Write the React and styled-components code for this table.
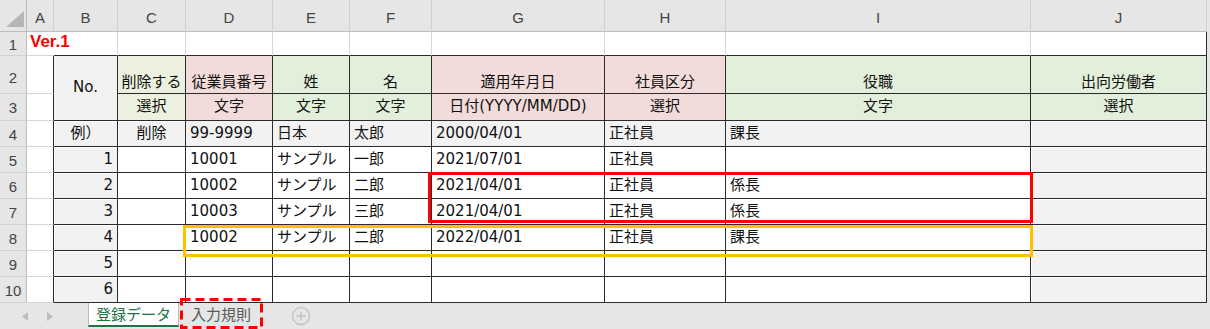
import React from 'react';
import styled, { createGlobalStyle } from 'styled-components';

const GlobalStyle = createGlobalStyle`
  html, body { margin: 0; padding: 0; background: #e6e6e6; }
  body {
    width: 1210px;
    height: 329px;
    overflow: hidden;
    font-family: "DejaVu Sans", "Noto Sans CJK JP", sans-serif;
  }
`;

const COLS = [27, 27, 64, 68, 87, 77, 82, 173, 121, 305, 176];
const ROWS = [32, 24, 38, 27, 26, 26, 26, 26, 26, 26, 26];
const LETTERS = ['A', 'B', 'C', 'D', 'E', 'F', 'G', 'H', 'I', 'J'];

const DARK = '#2b2b2b';
const GRID = '#d6d6d6';
const G1 = '#ebf1de';
const G2 = '#e2efda';
const PK = '#f2dcdb';
const GR = '#f2f2f2';

const Frame = styled.div`
  position: relative;
  width: 1210px;
  height: 329px;
  display: flex;
  flex-direction: column;
  background: #e6e6e6;
`;

const Sheet = styled.div`
  display: grid;
  grid-template-columns: ${COLS.map((c) => c + 'px').join(' ')};
  grid-template-rows: ${ROWS.map((r) => r + 'px').join(' ')};
  width: max-content;
  background: #fff;
`;

const Corner = styled.div`
  box-sizing: border-box;
  background: #e6e6e6;
  border-right: 1px solid #bdbdbd;
  border-bottom: 1px solid #bdbdbd;
  display: flex;
  align-items: flex-end;
  justify-content: flex-end;
  padding: 0 2px 4px 0;
`;

const ColHead = styled.div`
  box-sizing: border-box;
  background: #e6e6e6;
  border-right: 1px solid #d0d0d0;
  border-bottom: 1px solid #bdbdbd;
  display: flex;
  align-items: center;
  justify-content: center;
  padding-top: 4px;
  font-family: "Liberation Sans", Arial, sans-serif;
  font-size: 15px;
  color: #444;
`;

const RowHead = styled.div`
  box-sizing: border-box;
  background: #e6e6e6;
  border-right: 1px solid #bdbdbd;
  border-bottom: 1px solid #d2d2d2;
  display: flex;
  align-items: center;
  justify-content: center;
  padding-top: ${(p) => (p.$low ? '6px' : '1px')};
  font-family: "Liberation Sans", Arial, sans-serif;
  font-size: 15px;
  color: #444;
`;

const Cell = styled.div`
  box-sizing: border-box;
  grid-row: ${(p) => (p.$span ? `span ${p.$span}` : 'auto')};
  background: ${(p) => p.$bg || 'transparent'};
  border-right: 1px solid ${(p) => p.$rb || DARK};
  border-bottom: 1px solid ${(p) => p.$bb || DARK};
  box-shadow: ${(p) => (p.$inset ? 'inset 1px 1px 0 #fff' : 'none')};
  display: flex;
  align-items: ${(p) => p.$v || 'center'};
  justify-content: ${(p) =>
    p.$align === 'center' ? 'center' : p.$align === 'right' ? 'flex-end' : 'flex-start'};
  padding: 0 4px ${(p) => (p.$v === 'flex-end' ? '3px' : '1px')} 4px;
  font-size: 15px;
  line-height: 1;
  color: #111;
  white-space: nowrap;
  overflow: visible;
`;

const Version = styled.span`
  font-family: "Liberation Sans", Arial, sans-serif;
  font-weight: 700;
  font-size: 17px;
  color: #ff0000;
  margin-left: -1px;
  margin-top: -4px;
`;

const TabBar = styled.div`
  height: 26px;
  display: flex;
  align-items: stretch;
  background: #e6e6e6;
`;

const Nav = styled.div`
  width: 88px;
  display: flex;
  align-items: center;
  gap: 19px;
  padding-left: 22px;
  box-sizing: border-box;
`;

const Tab = styled.div`
  box-sizing: border-box;
  width: ${(p) => p.$w}px;
  display: flex;
  align-items: center;
  justify-content: center;
  padding-bottom: 2px;
  font-family: "Noto Sans CJK JP", sans-serif;
  font-size: 15px;
  color: ${(p) => (p.$active ? '#217346' : '#595959')};
  background: ${(p) => (p.$active ? '#fff' : 'transparent')};
  border-bottom: 2px solid ${(p) => (p.$active ? '#217346' : 'transparent')};
  border-left: 1px solid ${(p) => (p.$active ? '#bcbcbc' : 'transparent')};
  border-right: 1px solid ${(p) => (p.$active ? '#bcbcbc' : 'transparent')};
  margin-bottom: 2px;
`;

const AddSheet = styled.div`
  display: flex;
  align-items: center;
  margin-left: 28px;
`;

const Mark = styled.div`
  position: absolute;
  box-sizing: border-box;
  left: ${(p) => p.$x}px;
  top: ${(p) => p.$y}px;
  width: ${(p) => p.$w}px;
  height: ${(p) => p.$h}px;
  border: 3px solid ${(p) => p.$color};
  pointer-events: none;
`;

const DashMark = styled.svg`
  position: absolute;
  left: 180px;
  top: 298px;
  pointer-events: none;
`;

const head2 = [
  ['削除する', G1], ['従業員番号', PK], ['姓', G2], ['名', G2],
  ['適用年月日', PK], ['社員区分', PK], ['役職', G2], ['出向労働者', G2],
];
const head3 = [
  ['選択', G1], ['文字', PK], ['文字', G2], ['文字', G2],
  ['日付(YYYY/MM/DD)', PK], ['選択', PK], ['文字', G2], ['選択', G2],
];
const example = ['99-9999', '日本', '太郎', '2000/04/01', '正社員', '課長'];
const rows = [
  ['1', '10001', 'サンプル', '一郎', '2021/07/01', '正社員', ''],
  ['2', '10002', 'サンプル', '二郎', '2021/04/01', '正社員', '係長'],
  ['3', '10003', 'サンプル', '三郎', '2021/04/01', '正社員', '係長'],
  ['4', '10002', 'サンプル', '二郎', '2022/04/01', '正社員', '課長'],
  ['5', '', '', '', '', '', ''],
  ['6', '', '', '', '', '', ''],
];

const Arrow = ({ left }) => (
  <svg width="6" height="9" viewBox="0 0 6 9">
    <polygon points={left ? '6,0 6,9 0,4.5' : '0,0 0,9 6,4.5'} fill="#bdbdbd" />
  </svg>
);

const App = () => {
  return (
    <Frame>
      <GlobalStyle />
      <Sheet>
        <Corner>
          <svg width="18" height="16" viewBox="0 0 18 16">
            <polygon points="18,0 18,16 0,16" fill="#b6b6b6" />
          </svg>
        </Corner>
        {LETTERS.map((l) => (
          <ColHead key={l}>{l}</ColHead>
        ))}

        <RowHead>1</RowHead>
        <Cell $rb="transparent" $bb={GRID}>
          <Version>Ver.1</Version>
        </Cell>
        {LETTERS.slice(1).map((l, i) => (
          <Cell key={l} $rb={i === 8 ? DARK : GRID} />
        ))}

        <RowHead $low>2</RowHead>
        <Cell $bb={GRID} />
        <Cell $span={2} $bg={GR} $align="center">No.</Cell>
        {head2.map(([t, bg], i) => (
          <Cell key={i} $bg={bg} $align="center" $v="flex-end">{t}</Cell>
        ))}

        <RowHead>3</RowHead>
        <Cell $bb={GRID} />
        {head3.map(([t, bg], i) => (
          <Cell key={i} $bg={bg} $align="center">{t}</Cell>
        ))}

        <RowHead>4</RowHead>
        <Cell $bb={GRID} />
        <Cell $bg={GR} $align="center" $inset>例）</Cell>
        <Cell $bg={GR} $align="center" $inset>削除</Cell>
        {example.map((t, i) => (
          <Cell key={i} $bg={GR}>{t}</Cell>
        ))}
        <Cell $bg={GR} $inset />

        {rows.map(([n, ...vals], r) => (
          <React.Fragment key={n}>
            <RowHead>{r + 5}</RowHead>
            <Cell $bb={GRID} />
            <Cell $bg={GR} $align="right" $inset>{n}</Cell>
            <Cell />
            {vals.map((t, i) => (
              <Cell key={i}>{t}</Cell>
            ))}
            <Cell $bg={GR} $inset />
          </React.Fragment>
        ))}
      </Sheet>

      <TabBar>
        <Nav>
          <Arrow left />
          <Arrow />
        </Nav>
        <Tab $w={91} $active>登録データ</Tab>
        <Tab $w={84}>入力規則</Tab>
        <AddSheet>
          <svg width="20" height="20" viewBox="0 0 20 20">
            <circle cx="10" cy="10" r="8.5" fill="none" stroke="#c4c4c4" strokeWidth="1.5" />
            <path d="M10 5.5v9M5.5 10h9" stroke="#c4c4c4" strokeWidth="1.5" />
          </svg>
        </AddSheet>
      </TabBar>

      <Mark $x={428} $y={172} $w={605} $h={51} $color="#ff0000" />
      <Mark $x={183} $y={225} $w={850} $h={32} $color="#ffc000" />
      <DashMark width="83" height="31" viewBox="0 0 83 31">
        <rect x="1.5" y="1.5" width="80" height="28" fill="none" stroke="#ff0000" strokeWidth="3" strokeDasharray="9 5" />
      </DashMark>
    </Frame>
  );
};

export default App;
